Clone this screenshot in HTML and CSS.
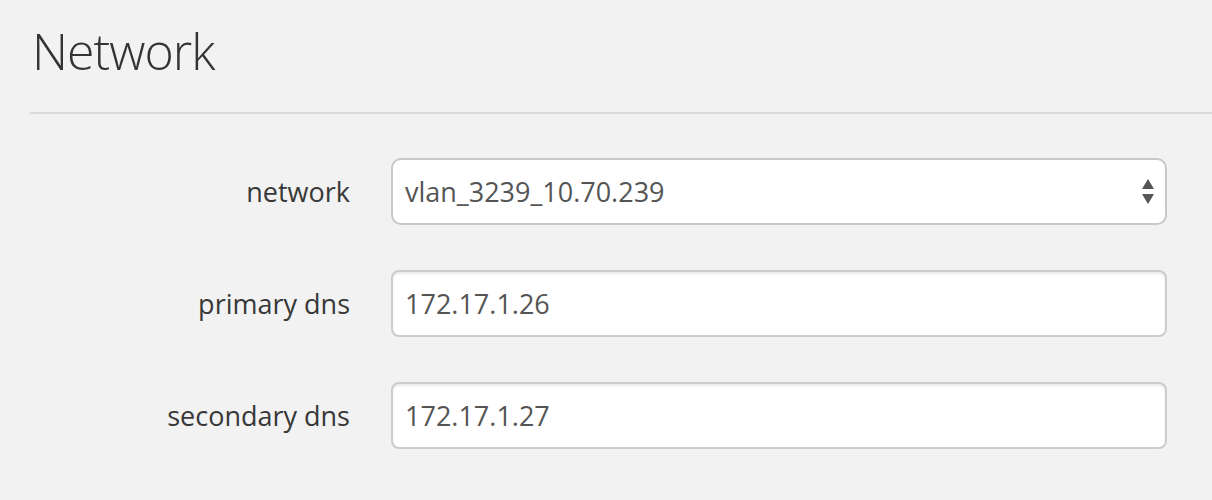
FILE: index.html
```html
<!DOCTYPE html>
<html>
<head>
<meta charset="utf-8">
<link rel="stylesheet" href="styles.css">
</head>
<body>
<div class="page">
  <h1 class="title">Network</h1>
  <div class="divider"></div>
  <form class="form">
    <label class="label" for="net">network</label>
    <div class="select-wrap">
      <select id="net" class="control select">
        <option>vlan_3239_10.70.239</option>
      </select>
      <svg class="arrows" width="12" height="26" viewBox="0 0 12 26">
        <polygon points="6,0 12,10 0,10" fill="#555"/>
        <polygon points="0,15 12,15 6,25" fill="#555"/>
      </svg>
    </div>
    <label class="label" for="dns1">primary dns</label>
    <input id="dns1" class="control input" type="text" value="172.17.1.26">
    <label class="label" for="dns2">secondary dns</label>
    <input id="dns2" class="control input" type="text" value="172.17.1.27">
  </form>
</div>
</body>
</html>
```

FILE: styles.css
```css
html, body {
  margin: 0;
  padding: 0;
  background: #f2f2f2;
}

body {
  font-family: "Open Sans", "DejaVu Sans", sans-serif;
  color: #333;
}

.page {
  padding: 26px 0 0 30px;
}

.title {
  margin: 0 0 36px 2px;
  font-size: 50px;
  line-height: 50px;
  font-weight: 300;
  letter-spacing: -1px;
  color: #333;
}

.divider {
  height: 2px;
  background: #dadada;
}

.form {
  display: grid;
  grid-template-columns: 320px 1fr;
  column-gap: 41px;
  row-gap: 45px;
  padding: 44px 45px 0 0;
}

.label {
  display: flex;
  align-items: center;
  justify-content: flex-end;
  height: 67px;
  font-size: 27px;
  color: #383838;
}

.control {
  box-sizing: border-box;
  width: 100%;
  height: 67px;
  margin: 0;
  padding: 0 12px;
  font-family: "Open Sans", "DejaVu Sans", sans-serif;
  font-size: 27px;
  color: #555;
  background: #fff;
  border: 2px solid #cccccc;
  outline: none;
}

.input {
  border-radius: 8px;
  box-shadow: inset 0 2px 2px rgba(0, 0, 0, 0.075);
}

.select-wrap {
  position: relative;
}

.select {
  appearance: none;
  -webkit-appearance: none;
  border-radius: 10px;
  border-color: #c8c8c8;
}

.arrows {
  position: absolute;
  right: 13px;
  top: 21px;
  pointer-events: none;
}
```
